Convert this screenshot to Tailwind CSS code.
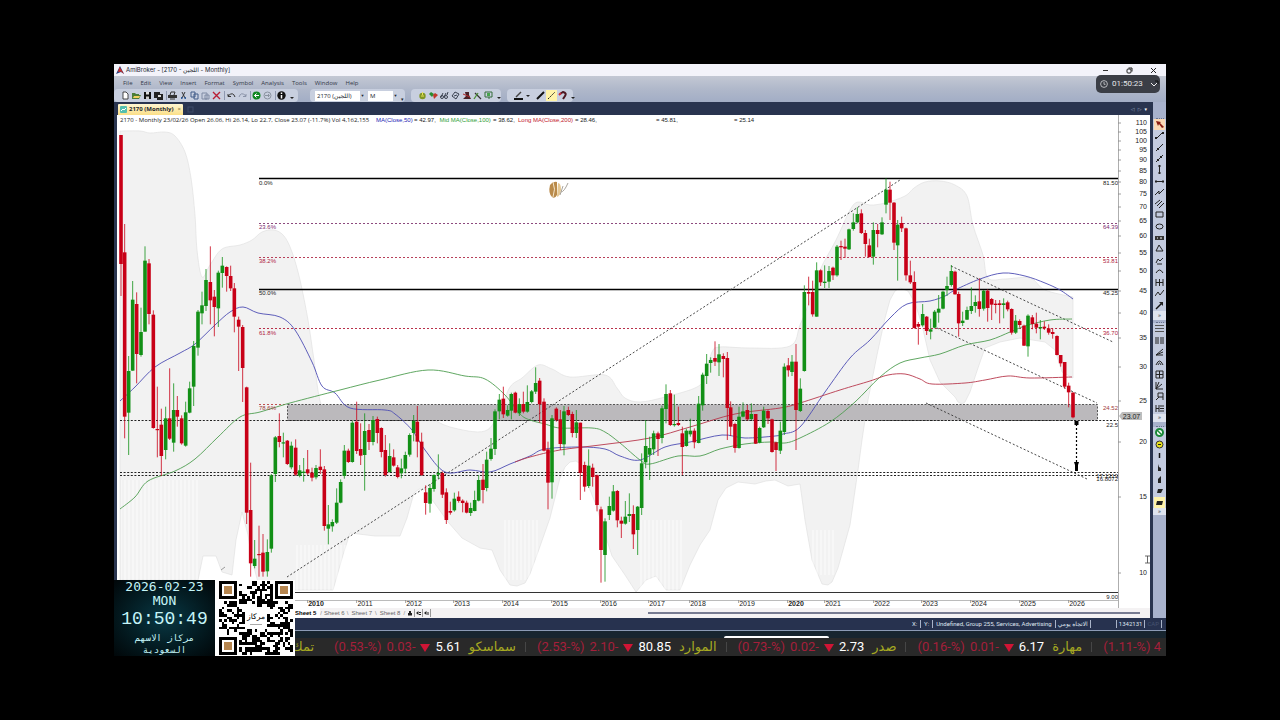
<!DOCTYPE html>
<html lang="en">
<head>
<meta charset="utf-8">
<title>AmiBroker - 2170 Monthly</title>
<meta name="viewport" content="width=device-width, initial-scale=1">
<script src="https://cdn.jsdelivr.net/npm/@tailwindcss/browser@4"></script>
</head>
<body class="bg-black min-h-screen px-[114px] py-16 font-['Open_Sans','Noto_Sans',sans-serif] text-[#20242e]">
<main class="relative flex flex-col bg-[#29344f] overflow-hidden">
  <header class="flex items-center h-3 bg-[#f3f3fa] pl-[2px] pr-[9px] text-[6px] leading-3">
    <svg class="w-2 h-2 mr-[2px]" viewBox="0 0 8 8"><path d="M0 8L4 0l4 8-3-2z" fill="#293b7a"/><path d="M3.500 1L8 8 5 5.500 2 6z" fill="#d23025"/></svg>
    <h1 class="font-['Inter','DejaVu_Sans',sans-serif]">AmiBroker - [2170 - <bdi>اللجين</bdi> - Monthly]</h1>
    <div class="ml-auto flex items-center gap-[17px]">
      <button aria-label="Minimize"><svg class="w-[7px] h-[7px]" viewBox="0 0 7 7"><path d="M1 3.500h5" stroke="#333"/></svg></button>
      <button aria-label="Restore"><svg class="w-[7px] h-[7px]" viewBox="0 0 7 7" fill="none" stroke="#222"><rect x="1" y="2" width="4" height="4" rx="1"/><path d="M2.500 1H6v3.500"/></svg></button>
      <button aria-label="Close"><svg class="w-[7px] h-[7px]" viewBox="0 0 7 7"><path d="M1 1l5 5M6 1L1 6" stroke="#222"/></svg></button>
    </div>
  </header>

  <nav class="flex items-center gap-2 h-[13px] pl-[9px] text-[6px] leading-3 text-[#333949] bg-linear-to-b from-[#c3c8d4] to-[#b0b8ca]">
    <button>File</button><button>Edit</button><button>View</button><button>Insert</button><button>Format</button><button>Symbol</button><button>Analysis</button><button>Tools</button><button>Window</button><button>Help</button>
  </nav>

  <div class="flex items-center h-[13px] bg-linear-to-b from-[#b0b8ca] to-[#a2adc5]">
    <div id="barA" class="flex items-center h-[13px] w-[184px] bg-[#c8cfdf] pl-[6px] rounded-sm"></div>
    <div class="flex items-center h-[13px] w-[95px] ml-3 bg-[#c8cfdf] pl-[5px] gap-[3px] text-[6px] rounded-sm">
      <span class="relative flex"><select aria-label="Ticker" class="appearance-none bg-white w-[50px] h-[10px] px-[2px] leading-[10px] text-[6px] font-['Open_Sans','DejaVu_Sans',sans-serif]"><option>2170 (اللجين)</option></select><i class="absolute right-0 top-0 w-[5px] h-[10px] bg-[#c9d0de] text-[4px] leading-[10px] not-italic text-center pointer-events-none">▼</i></span>
      <span class="relative flex"><select aria-label="Interval" class="appearance-none bg-white w-[30px] h-[10px] px-[2px] leading-[10px] text-[6px]"><option>M</option></select><i class="absolute right-0 top-0 w-[5px] h-[10px] bg-[#c9d0de] text-[4px] leading-[10px] not-italic text-center pointer-events-none">▼</i></span>
      <span class="text-[5px] leading-[5px] self-end">▾</span>
    </div>
    <div id="barB" class="flex items-center h-[13px] w-[90px] ml-[6px] bg-[#c8cfdf] pl-[6px] rounded-sm"></div>
    <div id="barC" class="flex items-center h-[13px] w-[66px] ml-[6px] bg-[#c8cfdf] pl-[6px] rounded-sm"></div>
  </div>

  <div class="flex">
    <div class="flex-1 min-w-0 flex flex-col">
      <div class="flex items-end h-[13px] bg-[#29344f] pl-[4px] pr-[6px]">
        <button class="flex items-center gap-[2px] h-[11px] bg-linear-to-b from-[#fff6d2] to-[#fbdf86] px-[2px] text-[6px] leading-[11px] font-bold rounded-t-[1px]">
          <svg class="w-[7px] h-[7px]" viewBox="0 0 7 7"><rect width="7" height="7" rx="1" fill="#54bfae"/><path d="M1 5l2-2 1 1 2-2" stroke="#fff" fill="none"/></svg>
          <span>2170 (Monthly)</span><span class="font-normal text-[#6d6030] ml-[2px]">×</span>
        </button>
        <button aria-label="New tab" class="ml-1 mb-[2px]"><svg class="w-[7px] h-[7px]" viewBox="0 0 7 7"><rect x="1" y="1" width="5" height="5" fill="none" stroke="#3e4a68"/></svg></button>
        <div class="ml-auto flex items-center gap-[3px] h-[11px] text-[5px] leading-[11px] text-[#97a5c2] font-['DejaVu_Sans',sans-serif]"><span>◁</span><span>▷</span><span class="text-white">▾</span></div>
      </div>
      <div class="mx-[3px] bg-white">
        <svg id="chart" class="block w-full" viewBox="117 115 1033 493" font-family="'Liberation Sans', Arimo, sans-serif" font-size="6" role="img" aria-label="Monthly price chart"></svg>
        <div class="flex items-center h-[10px] bg-[#f4f2f3] text-[6px] leading-[10px] font-['Liberation_Sans',sans-serif]">
          <div class="flex items-center pl-[178px] text-[#666]">
            <button class="font-bold text-black bg-white pr-1">Sheet 5</button><span class="text-[#888]">/</span>
            <button class="px-[2px]">Sheet 6</button><span class="text-[#888]">\</span>
            <button class="px-[3px]">Sheet 7</button><span class="text-[#888]">\</span>
            <button class="px-[3px]">Sheet 8</button><span class="text-[#888]">/</span>
          </div>
          <svg class="w-[26px] h-[8px]" viewBox="0 0 26 8"><path d="M3 4h4v2.500H3zM4 4V2h2v2" fill="#222"/><path d="M9.500 0v8M17.500 0v8M25.500 0v8" stroke="#999"/><path d="M11 4l2.500-2v4zM14 3h2v1h-2zM14 5h2v1h-2zM19 4l2.500-2v4zM22.500 3h1v3h-1z" fill="#222"/></svg>
          <div class="flex-1 h-[2px] bg-[#777b91] ml-[217px] mr-[10px]"></div>
        </div>
      </div>
    </div>
    <aside class="w-[13px] bg-[#a8b2cc] flex flex-col items-center pt-[13px]">
      <div class="w-2 border-t border-dotted border-[#68738f] mt-[3px]"></div>
      <div id="sideA" class="flex flex-col justify-around items-center h-[192px] w-[13px] bg-[#c3cbdf]"></div>
      <div class="w-[13px] h-[9px] bg-[#dfe4ef] text-[6px] leading-[8px] text-center">»</div>
      <div class="w-2 border-t border-dotted border-[#68738f] mt-[2px]"></div>
      <div id="sideB" class="flex flex-col justify-around items-center h-[91px] w-[13px] bg-[#c3cbdf]"></div>
      <div class="w-[13px] h-[8px] bg-[#dfe4ef] text-[6px] leading-[7px] text-center">»</div>
      <div class="w-2 border-t border-dotted border-[#68738f] mt-[4px]"></div>
      <div id="sideC" class="flex flex-col justify-around items-center h-[81px] w-[13px] bg-[#c3cbdf]"></div>
      <div class="w-[13px] h-[7px] bg-[#dfe4ef] text-[6px] leading-[6px] text-center">»</div>
    </aside>
  </div>

  <footer class="flex items-center justify-end h-[13px] bg-[#27324f] border-b border-[#8b9bb5] text-[6px] leading-3 text-[#dfe4ee] font-['Roboto','DejaVu_Sans',sans-serif]">
    <span class="pr-[3px]">X:</span><span class="border-l border-[#a9b3c8] h-2 leading-2 px-[3px]">Y:</span>
    <span class="border-l border-[#a9b3c8] h-2 leading-2 px-[3px]">Undefined, Group 255, Services, Advertising</span>
    <span class="border-l border-[#a9b3c8] h-2 leading-2 px-[2px]" dir="rtl" lang="ar">الاتجاه يومي</span>
    <span class="border-l border-[#a9b3c8] h-2 w-[26px]"></span>
    <span class="border-l border-[#a9b3c8] h-2 leading-2 px-[2px]">1342131</span>
    <span class="border-l border-[#a9b3c8] h-2 leading-2 px-[2px] text-[#46526f]">CAP</span>
    <span class="border-l border-[#a9b3c8] h-2 w-[5px]"></span>
  </footer>
  <div class="h-[7px] bg-[#17252f] flex items-end"><div class="ml-[58%] w-[105px] h-[2px] bg-white rounded-t-full"></div></div>
  <section id="ticker" aria-label="Quotes" class="flex items-center h-[18px] bg-[#292929] pl-[178px] overflow-hidden whitespace-nowrap text-[13px] leading-[18px] font-['Roboto','DejaVu_Sans',sans-serif] text-[#a51f3b]"></section>

  <!-- Clock and QR code overlays -->
  <div class="absolute left-0 bottom-0 flex h-[76px]">
    <section class="relative w-[101px] bg-radial from-[#093945] to-[#010709] text-center font-['DejaVu_Sans_Mono',monospace] text-[#c5f5f8] overflow-hidden">
      <svg class="absolute right-[8px] top-0 w-[27px] h-[27px]" viewBox="0 0 27 27"><path d="M6 1a12 12 0 1 0 20 19A12 12 0 0 1 6 1z" fill="#9fe6ee"/></svg>
      <p class="relative text-[13px] leading-[14px]">2026-02-23</p>
      <p class="relative text-[13px] leading-[13px]">MON</p>
      <p class="relative text-[18px] leading-[25px] font-['Liberation_Mono',monospace]">10:50:49</p>
      <p class="relative text-[9px] leading-[12px]" dir="rtl" lang="ar">مركاز الاسهم<br>السعودية</p>
    </section>
    <div class="w-[80px] bg-white pt-[1px] pl-1"><svg id="qr" class="w-[74px] h-[74px]" viewBox="0 0 29 29" shape-rendering="crispEdges" role="img" aria-label="QR code"></svg></div>
  </div>

  <!-- Recording timer -->
  <div class="absolute right-[6px] top-[11px] flex items-center gap-1 w-16 h-[18px] rounded-[5px] bg-[#3b3e46] text-[#e6e7ea] text-[8px] leading-[18px] pl-1 font-['Roboto',sans-serif]">
    <svg class="w-2 h-2" viewBox="0 0 8 8" fill="none" stroke="#d5d6d9"><circle cx="4" cy="4" r="3.400" stroke-width=".8"/><path d="M4 2v2.300h1.500" stroke-width=".8"/></svg>
    <span>01:50:23</span>
    <svg class="w-[9px] h-2 ml-[3px]" viewBox="0 0 9 8" fill="none" stroke="#eee"><path d="M1 3l3 3 3-3"/><path d="M5 1h3v3" stroke="#111"/></svg>
  </div>
</main>

<script>
const G = '#129016', R = '#c80017';
/* Candles per segment: x, high, body top, body bottom, low (third-pixels from the segment origin). Negative x marks a falling month. */
const segments = [
 [114,350,`-21 -645 -645 -258 -162;-32 -378 -293 200 265;44 18 63 188 315;56 -207 -151 62 62;-68 -173 -138 12 100;81 -127 -54 15 20;93 -311 -268 -55 -55;-105 -273 -260 -108 -77;-118 -119 -106 234 236;-130 110 237 240 322;-142 176 224 318 378;155 170 205 300 328;-167 55 205 266 270;179 100 180 278 305;-190 138 180 200 230;-203 196 205 280 284;215 155 187 287 290;227 95 115 188 190;239 -27 -12 110 168;252 -120 -115 -7 17;264 -175 -134 -110 -77;276 -243 -210 -132 -117;-289 -311 -204 -149 -77;-301 -180 -160 -129 -41;313 -238 -232 -125 -69;325 -279 -253 -231 -187;-338 -251 -249 -222 -175;-350 -253 -222 -185 -177;-361 -201 -185 -100 -53;-374 -100 -91 -70 63;-386 -75 -69 54 156;-398 110 112 488 522;-410 338 480 640 680;422 570 626 648 655;-435 527 612 615 680;-447 552 608 665 680;460 568 606 664 680;472 372 376 596 608;484 258 262 372 396;-496 190 258 276 292;508 248 277 280 322;-520 270 272 342 345;532 275 287 352 358;-545 268 293 374 378;557 345 361 377 382;569 324 365 369 395;-581 300 358 370 375;-594 353 368 383 394;606 345 354 382 388;-619 298 350 360 372;-631 348 358 528 542;643 465 523 536 583;655 508 516 529 545;668 415 458 518 522;680 388 396 458 460;691 285 302 378 386;-703 296 302 336 339;715 212 218 336 338;-728 155 215 303 312;-740 220 297 317 345;752 190 243 315 422;-765 222 240 276 300;777 198 210 276 286;-790 200 207 249 280;-802 232 234 306 322`],
 [380,350,`-16 255 300 375 380;29 280 318 366 368;-41 298 322 347 350;-53 345 352 381 385;64 326 355 370 385;76 305 315 356 370;89 250 255 314 320;101 195 213 249 274;-112 168 215 275 322;-125 248 275 375 378;-137 406 427 459 494;150 402 414 461 488;162 373 375 417 425;175 313 369 374 387;-187 364 369 434 444;-199 415 427 510 522;-211 455 483 488 494;223 428 446 481 485;-236 424 440 453 458;-248 448 452 459 487;-260 452 458 488 490;272 458 474 489 498;284 422 450 483 484;296 375 390 452 454;-309 342 389 420 460;320 305 329 414 424;333 264 296 327 332;345 178 184 297 315;358 132 149 184 208;-370 110 146 193 204;383 166 180 197 200;394 128 132 182 208;-406 125 128 188 190;418 145 162 190 198;-430 125 162 185 190;442 106 156 185 188;455 120 124 156 160;467 52 99 125 132;-479 84 92 163 218;-492 145 155 302 304;-504 275 298 398 478;516 195 205 397 446;-529 172 176 210 215;-541 180 208 282 300;552 168 184 283 316;-565 170 180 195 198;-577 185 192 249 262;589 180 217 249 264;-601 218 218 369 450;-614 335 345 410 425;626 298 347 408 414;-638 341 353 381 410;-651 374 376 465 484;-663 470 478 600 698;675 505 514 615 695;688 440 468 495 510;700 405 424 482 485;-712 420 423 511 532;-724 500 512 521 564;736 453 500 521 524;748 430 492 498 516;-760 466 492 553 597;773 468 470 540 615;785 310 340 474 495;797 210 288 337 355`],
 [640,320,`29 350 384 404 480;41 332 340 388 405;-54 335 340 357 408;66 257 265 354 370;78 193 222 267 310;-91 210 220 315 318;103 224 312 315 320;-115 260 309 315 318;-127 320 340 381 465;139 326 332 378 380;151 296 332 343 350;-163 325 332 367 385;176 228 251 369 370;188 158 164 256 272;200 102 131 168 192;212 112 120 129 158;-225 64 114 125 138;237 72 103 127 168;-250 100 108 117 172;-262 96 114 264 360;-272 244 262 320 348;-285 308 312 384 398;297 260 290 384 386;309 247 274 290 292;-322 255 270 298 302;334 250 282 297 300;-347 282 282 371 372;359 320 324 368 370;371 260 272 322 324;-384 270 273 295 312;-396 296 298 396 398;-408 365 367 390 453;421 305 332 392 402;433 130 140 336 345;-445 114 136 151 170;456 105 125 156 168;-468 72 125 270 390;481 175 206 273 276`],
 [790,160,`43 376 396 633 635;-56 350 396 401 436;-68 362 396 463 470;80 307 331 470 470;-92 328 331 367 378;104 316 365 369 384;117 318 333 365 384;-129 320 323 346 360;141 255 260 346 350;-153 242 258 262 300;-165 236 260 266 294;177 206 208 268 270;190 160 187 207 212;202 142 162 187 190;-214 148 160 219 222;-226 210 219 252 290;-238 236 256 291 292;250 187 210 290 314;-263 192 210 222 262;276 172 187 223 225;288 55 89 134 160;-300 65 89 128 180;-312 126 128 248 270;323 180 194 256 362;-335 170 189 205 216;-348 203 205 346 362;-361 302 346 367 372;-373 334 366 504 506;-385 486 492 500 554;398 432 462 496 500;-410 468 470 513 525;422 476 508 515 538;434 450 455 503 505;446 405 446 458 488;459 392 395 446 448;471 350 378 390 408;484 315 333 375 380;-495 332 335 403 404;-506 395 402 490 530;518 455 482 489 498;531 440 450 479 480;544 382 438 453 462;556 406 426 438 458;-568 355 424 447 470;581 390 392 446 452;-593 388 392 444 485`],
 [960,240,`-95 174 177 194 240;-107 180 191 195 220;-119 180 190 195 250;131 175 190 195 235;-143 182 187 208 214;-155 205 207 278 284;167 225 242 278 282;-179 238 243 255 262;-192 254 257 317 318;204 223 227 319 350;-217 225 232 252 268;-229 218 251 263 280;241 240 261 265 298;-253 244 260 265 270;-266 253 265 278 284;-278 265 276 282 296;-291 286 288 345 346;-302 345 345 370 380;-314 366 366 440 446;-326 428 437 457 502;-339 456 458 532 535`]
];
const line = (x1,y1,x2,y2,c,w=1,d='') => `<line x1="${x1}" y1="${y1}" x2="${x2}" y2="${y2}" stroke="${c}" stroke-width="${w}" ${d?`stroke-dasharray="${d}"`:''}/>`;
const text = (x,y,s,c='#222',extra='') => `<text x="${x}" y="${y}" fill="${c}" ${extra}>${s}</text>`;
/* Smooth curve through the points */
function curve(s){
  const p = s.split(' ').map(q=>q.split(',').map(Number));
  let d = `M${p[0]}`;
  for(let i=0;i<p.length-1;i++){
    const a=p[i-1]||p[i], b=p[i], c=p[i+1], e=p[i+2]||c;
    d += `C${b[0]+(c[0]-a[0])/6},${b[1]+(c[1]-a[1])/6} ${c[0]-(e[0]-b[0])/6},${c[1]-(e[1]-b[1])/6} ${c}`;
  }
  return d;
}
const upper='120,131 140,131 150,133 165,132 175,136 185,152 191,178 195,215 197,250 202,277 210,265 222,249 240,245 252,240 262,232 274,230 284,236 292,252 300,280 308,320 314,360 321,404 335,419 380,420 395,412 425,416 450,427 485,431 500,410 510,387 522,378 538,365 552,369 570,377 605,375 617,388 625,398 640,402 665,397 697,387 705,375 712,352 720,347 750,348 790,346 800,325 810,300 820,270 836,240 850,210 858,202 870,205 885,203 905,196 914,188 925,182 940,181 955,185 967,196 973,225 983,255 988,278 1005,279 1030,278 1045,290 1073,297';
const lower='1073,378 1062,372 1055,350 1045,342 1020,338 1000,342 985,348 978,368 970,392 965,402 962,404 958,402 955,397 940,382 930,360 922,325 915,303 908,291 900,288 895,291 890,300 885,318 877,355 868,400 862,440 858,470 850,525 838,568 832,582 828,585 822,584 812,560 805,520 800,484 788,486 775,480 766,481 755,484 738,482 726,488 718,500 710,530 700,545 690,565 680,590 666,590 656,576 646,580 636,592 625,575 612,556 602,525 596,505 590,490 582,465 576,461 570,462 565,467 560,478 550,518 538,552 530,574 525,583 517,586 510,585 500,570 492,550 480,548 462,538 448,522 438,508 425,490 419,489 414,493 407,518 400,536 375,536 350,533 343,555 333,590 260,590 252,560 248,535 242,512 236,540 232,575 222,572 216,556 203,556 198,580 120,580';
let h = `<defs><pattern id="st" width="4" height="8" patternUnits="userSpaceOnUse"><path d="M1 0v8" stroke="#fff" stroke-opacity=".7"/></pattern></defs><rect x="117" y="115" width="1033" height="493" fill="#fff"/>`;
h += `<path d="${curve(upper)} L${lower}Z" fill="#f2f2f2" stroke="#dedede" stroke-width=".6"/>`;
h += `<rect x="121" y="480" width="78" height="100" fill="url(#st)"/><rect x="296" y="545" width="50" height="45" fill="url(#st)"/><rect x="502" y="520" width="38" height="60" fill="url(#st)"/><rect x="640" y="520" width="44" height="70" fill="url(#st)"/><rect x="810" y="530" width="26" height="45" fill="url(#st)"/>`;
h += `<rect x="287.500" y="404.500" width="810" height="16" fill="#bbb9bc" stroke="#333" stroke-dasharray="2 1.500" stroke-width=".8"/>`;
h += line(259,178.5,1118,178.5,'#000',1.4)+line(259,289.500,1118,289.500,'#000',1.4);
h += line(259,223.500,1118,223.500,'#8d4a7e',1,'2 2')+line(259,257.500,1118,257.500,'#b8405a',1,'2 2')+line(259,328.500,1118,328.500,'#b8304a',1,'2 2')+line(259,404.500,287,404.500,'#c05050',1,'2 2');
[420.500,472.500,475.500].forEach(y=>h+=line(120,y,1118,y,'#222',1,'2 1.600'));
h += line(287,577,900,180,'#333',.9,'2 2')+line(951,266,1113,342,'#333',.9,'2 2')+line(937,328,1097,403,'#333',.9,'2 2')+line(926,403,1087,479,'#333',.9,'2 2');
[['#4d4db3','120,401 135,387 155,367 180,353 195,344 215,325 230,312 243,307 258,313 280,317 295,330 312,362 322,386 335,393 350,408 385,410 395,414 412,430 425,450 445,472 470,470 490,472 510,464 530,456 545,449 580,447 605,449 620,456 640,460 665,447 690,442 722,435 745,438 775,436 783,434 800,427 825,392 850,358 870,340 890,318 907,304 930,301 945,296 955,290 980,279 1003,273 1025,276 1045,283 1060,290 1073,299'],
 ['#4e9d50','120,509 135,497 148,481 175,471 195,459 218,437 240,417 260,412 290,403 340,390 380,380 428,370 465,376 485,379 505,395 520,414 530,420 545,424 560,428 592,428 605,432 620,443 640,460 650,464 678,456 700,456 720,449 745,444 770,442 785,443 800,438 830,422 855,402 880,377 900,363 920,358 940,354 965,345 990,340 1010,332 1025,326 1050,320 1072,319'],
 ['#b8384c','515,462 530,457 560,450 600,445 650,438 690,427 735,414 780,408 800,403 840,390 870,381 888,375 905,374 920,379 932,384 965,383 985,380 1008,376 1030,378 1072,377']
].forEach(([c,s])=>h+=`<path d="${curve(s)}" fill="none" stroke="${c}" stroke-width=".9"/>`);
for(const [ox,oy,s] of segments) for(const r of s.split(';')){
  const [x0,hi,t,b,lo]=r.split(' ').map(Number), c=x0<0?R:G, x=ox+Math.abs(x0)/3, Y=v=>oy+v/3;
  h += line(x,Y(hi),x,Y(lo),c,.8)+`<rect x="${x-1.8}" y="${Y(t)}" width="3.600" height="${Math.max(1.2,(b-t)/3)}" fill="${c}"/>`;
}
h += line(1076.5,424,1076.5,468,'#000',1.2,'2 2')+`<path d="M1074.500 421h4v4h-4zM1074 462h5l-1 3v6h-3v-6z"/>`;
[[185,'0.0%','81.50','#222'],[229,'23.6%','64.39','#7d2a70'],[263,'38.2%','53.81','#b02242'],[295,'50.0%','45.25','#222'],[335,'61.8%','36.70','#b02242'],[410,'78.6%','24.52','#a03a3a']].forEach(([y,a,b,c])=>h+=text(259,y,a,c)+text(1118,y,b,c,'text-anchor="end"'));
h += text(1118,427,'22.5','#222','text-anchor="end"')+text(1118,478,'17.1319','#222','text-anchor="end"')+text(1118,481,'16.8072','#222','text-anchor="end"')+text(1118,599,'9.00','#222','text-anchor="end"');
h += line(120,592.500,1118,592.500,'#333',1.2)+line(120,600.500,1118,600.500,'#aaa',.8)+line(1118.500,115,1118.500,608,'#999',.8);
[[110,123],[105,132],[100,141],[95,150],[90,160],[85,171],[80,182],[75,194],[70,207],[65,221],[60,236],[55,253],[50,271],[45,291],[40,313],[35,338],[30,367],[25,401],[20,442],[15,497],[10,573]].forEach(([v,y])=>h+=line(1118,y,1121,y,'#888',.8)+text(1147,y+2,v,'#222','text-anchor="end" font-size="7"'));
[[2010,316],[2011,365],[2012,414],[2013,462],[2014,511],[2015,560],[2016,609],[2017,657],[2018,698],[2019,747],[2020,796],[2021,833],[2022,882],[2023,930],[2024,979],[2025,1028],[2026,1077]].forEach(([v,x])=>h+=line(x-8.5,600,x-8.5,603,'#888',.7)+text(x,606,v,'#222',`text-anchor="middle" font-size="7" ${v%10?'':'font-weight="bold"'}`));
h += `<path d="M1119 416l3-4h20v8h-20z" fill="#bdbdbd"/>`+text(1131.5,418.500,'23.07','#222','text-anchor="middle" font-size="7"');
h += `<g transform="translate(557 190)"><path d="M-7-5q3-4 7-3v13q-2 4-5 2-4-4-2-12z" fill="#b98a4a"/><path d="M-4-8q3 7 0 15" stroke="#f5e7cc" fill="none"/><path d="M1-7q3 0 3 7-1 6-4 7z" fill="#e5c894"/><path d="M4 2q3 0 7-9M3 5l3-9" stroke="#a9a49c" fill="none"/></g>`;
h += `<path d="M221 570l4-3" stroke="#999"/><path d="M1145 556h5M1147.500 556v7M1145 563h5" stroke="#444" stroke-width=".8"/>`;
h += `<text y="122" fill="#222"><tspan x="120" font-family="'Open Sans', sans-serif">2170 - Monthly 23/02/26 Open 26.06, Hi 26.14, Lo 22.7, Close 23.07 (-11.7%) Vol 4,162,155</tspan><tspan x="376" fill="#2222b5">MA(Close,50)</tspan><tspan x="414">= 42.97,</tspan><tspan x="439.500" fill="#2f9e35">Mid MA(Close,100)</tspan><tspan x="493">= 38.62,</tspan><tspan x="518" fill="#c2182b">Long MA(Close,200)</tspan><tspan x="575">= 28.46,</tspan><tspan x="656">= 45.81,</tspan><tspan x="734">= 25.14</tspan></text>`;
document.getElementById('chart').innerHTML = h;

/* Toolbars: label, icon markup on a 9x9 grid, optional background */
const S = (d,c='#222',w=1)=>`<path d="${d}" fill="none" stroke="${c}" stroke-width="${w}"/>`, F=(d,c='#222')=>`<path d="${d}" fill="${c}"/>`;
const caret=['More',F('M2 6h4l-2 2z')], bar=['|',''];
const fill=(id,a)=>document.getElementById(id).innerHTML=a.map(([n,m,bg])=>n==='|'?'<span class="w-px h-[9px] ml-[2px] mr-[1px] bg-[#8e98b0]"></span>':`<button aria-label="${n}" class="shrink-0 w-[11px] h-[11px] flex items-center justify-center ${bg||''}"><svg class="w-[9px] h-[9px]" viewBox="0 0 9 9">${m}</svg></button>`).join('');
fill('barA',[
 ['New',F('M2 1h3l2 2v5H2z','#fff')+S('M2 1h3l2 2v5H2z','#222',.8)],['Open',F('M0 8V2h3l1 1h3v1h2L7 8z','#4c7d38')+F('M2 5h6L7 7H1z','#f3d060')],['Save',F('M1 1h7v7H1z','#111')+F('M3 1h3v2.500H3z','#ddd')+F('M3 5.500h3V8H3z','#ccc')],['Save all',F('M0 1h6v6H0z','#222')+F('M3 3h6v6H3z','#222')+F('M4 4h3v2H4z','#ddd')],bar,
 ['Print',F('M0 4h9v3H0z','#333')+S('M2 4l1-3h4L6 4M2 8h5','#333')],['Cut',S('M3 1l3 6M6 1L3 7','#333')+S('M2 7h1.500M5.500 7H7','#335f9c',2)],['Copy',S('M1 1h4v5H1zM4 3h4v5H4z','#425c88')],['Paste',S('M1 2h5v6H1zM4 4h4v4H4z','#7f8aa3')],['Delete',S('M1 1l7 7M8 1L1 8','#b81e36',1.4)],bar,
 ['Undo',S('M1 3v2.500h3M1 5q5-5 7 1','#333')],['Redo',S('M8 3v2.500H5M8 5Q3 0 1 6','#8a93a8')],bar,
 ['Back','<circle cx="4.500" cy="4.500" r="4" fill="#108724"/>'+S('M7 4.500H2.500M4.500 2.500l-2 2 2 2','#fff')],['Forward','<circle cx="4.500" cy="4.500" r="3.500" fill="none" stroke="#8a93a0"/>'+S('M2 4.500h4M5 3l1.500 1.500L5 6','#8a93a0')],bar,
 ['Info','<circle cx="4.500" cy="4.500" r="4.200" fill="#111"/>'+S('M4.500 1.500v1.500M4.500 4v3.500','#fff',1.500)],caret]);
fill('barB',[
 ['Smile','<circle cx="4.500" cy="5" r="3.200" fill="#819625"/>'+S('M3 5h3M4.500 1v3','#e7e25c')],['Symbol',F('M0 3l2-2 3 2-2 3z','#2a8d30')+F('M4 4l2-2 3 2-4 4z','#c0392b')],['Explore',S('M1 6l2-4M4 6l2-4M7 4l1-3','#3a4150')+'<circle cx="2" cy="6" r="1.500" fill="none" stroke="#3a4150"/><circle cx="6" cy="6" r="1.500" fill="none" stroke="#3a4150"/>'],['Scan',S('M1 5l3-4 4 2-3 5z','#3a4150')+S('M3 5l3-1','#3a4150')],['Backtest',F('M3 1h4v3l2 4H1l3-3z','#4a2227')+S('M1 3l7 3','#b52d30')],['Wand',S('M2 2l6 6','#333',1.300)+S('M1 8l4-6','#4a8f35',1.300)],['Report',S('M1 1h7v5H1zM5 6v2','#356c3a')+F('M3 2h3v3H3z','#47a44d')],caret]);
fill('barC',[
 ['Line colour',S('M2 6l5-5','#444',1.500)+F('M0 7h9v2H0z','#111')],['Options',F('M1 4h4L3 6z')],['Thick line',S('M1 8l7-7','#111',2)],['Dashed line',S('M1 8l7-7','#222',1).replace('/>',' stroke-dasharray="2 1"/>'),'bg-[#fff3a8]'],['Magnet',S('M2 3l3-2q4 1 2 4L5 8','#4c1722',2)+S('M1 4l2-2','#c92b3b',2)],caret]);
fill('sideA',[
 ['Select',F('M1 1l5 1-1 1 4 4-2 1-3-4-1 2z','#8a1c12'),'bg-[#fbd9b4]'],['Trend line',S('M1.500 7.500l6-6')+F('M0 6h2v2H0zM7 1h2v2H7z')],['Ray',S('M1 8l7-7')+F('M2 5h2v2H2z')],['Extended',S('M1 8l7-7')+F('M2 5h2v2H2zM5 2h2v2H5z')],['Vertical',S('M4.500 0v9')+F('M3.500 0h2v2h-2zM3.500 7h2v2h-2z')],['Horizontal',S('M0 4.500h9')+F('M0 3.500h2v2H0zM7 3.500h2v2H7z')],['Channel',S('M0 7l4-4v3l5-5')],['Parallel',S('M0 5l5-4M2 7l5-5M4 9l5-5')],['Rectangle',S('M1 2h7v5H1z')],['Ellipse','<ellipse cx="4.500" cy="4.500" rx="3.500" ry="2.500" fill="none" stroke="#222"/>'],['Text',F('M0 3h9v4H0z','#333')+S('M2 5h1M5 5h2','#fff')],['Triangle',S('M4 1L1 7h7z')],['Gann',S('M1 7l2-4 2 2 3-3M2 8h5')],['Arc',S('M1 6q3.500-6 7 0')],['Cycle',S('M1 1v7M4.500 1v7M8 1v7M1 4.500h7')],['Zigzag',S('M0 7l3-4 2 3 4-5')],['Arrow',S('M1 8l6-6','#111',1.500)+F('M4 1h4v4z')]]);
fill('sideB',[
 ['Fib retracement',S('M0 1.500h9M0 4.500h9M0 7.500h9','#555')],['Fib zones',S('M1 1v7M3 1v7M6 1v7M8 1v7')],['Fib fan',S('M1 8l7-6M1 8l7-3M1 8h7')],['Fib arc',S('M1 7q3.500-8 7 0M3 7q1.500-4 3 0')],['Grid',S('M1 1h7v7H1zM4.500 1v7M1 4.500h7')],['Gann fan',S('M1 1v7h7M1 8l3-7M1 8l6-5')],['Regression',S('M1 8l3-3M3 1h5v4H3zM8 5v3')],['Extension',S('M1 1v7M1 4.500h3M4 1v7M5 2h4M5 4.500h4M5 7h4')]]);
fill('sideC',[
 ['Buy','<circle cx="4.500" cy="4.500" r="3.500" fill="#fff" stroke="#1a8a38" stroke-width="2"/>'+S('M2 2l5 5','#1a8a38',1.5)],['Sell','<circle cx="4.500" cy="4.500" r="3.500" fill="#e9e11e" stroke="#333"/>'+S('M3 4.500h3')],['One',S('M4.500 2v5','#111',1.5)],['Drop',F('M4 1v3l2 1v3H3V4z')],['Note',F('M6 1L3 4v4h3z')],['Flag',F('M2 7l1-4h5L6 7z')],['Marker',F('M1 7l1-4h6L7 7z'),'bg-[#fff3a8]']]);

/* Quote strip */
const quotes=[['0.53','0.03-','5.61','سماسكو'],['2.53','2.10-','80.85','الموارد'],['0.73','0.02-','2.73','صدر'],['0.16','0.01-','6.17','مهارة']];
document.getElementById('ticker').innerHTML='<span class="text-[#a7a921] mr-5" dir="rtl">تمك</span>'+quotes.map(([p,c,v,n])=>`<span class="shrink-0 flex items-center gap-[5px] mr-[11px]" dir="ltr"><span>(${p}-%)</span><span>${c}</span><svg class="w-[10px] h-[9px]" viewBox="0 0 10 9"><path d="M0 1h10L5 9z" fill="#d01535"/></svg><span class="text-white">${v}</span><bdi class="text-[#a7a921] ml-[3px]">${n}</bdi><span class="w-px h-[10px] bg-[#464646] ml-1"></span></span>`).join('')+'<span class="shrink-0">(1.11-%) 4</span>';

/* QR symbol */
let q='',seed=7;
const rnd=()=>(seed=(seed*16807)%2147483647)/2147483647;
for(let y=0;y<29;y++)for(let x=0;x<29;x++){const v=rnd()<.53;if((x<8&&y<8)||(x>20&&y<8)||(x<8&&y>20)||(x>9&&x<19&&y>9&&y<19))continue;if(v)q+=`M${x} ${y}h1v1h-1z`;}
let qh=`<path d="${q}"/>`;
[[0,0],[22,0],[0,22]].forEach(([x,y])=>qh+=`<rect x="${x+.5}" y="${y+.5}" width="6" height="6" fill="none" stroke="#000"/><rect x="${x+2}" y="${y+2}" width="3" height="3" fill="#b5854f"/>`);
qh+=`<text x="14.500" y="15" font-size="3" text-anchor="middle" font-family="DejaVu Sans, sans-serif">مركاز</text><path d="M12 17h5" stroke="#aaa" stroke-width=".4"/>`;
document.getElementById('qr').innerHTML=qh;
</script>
</body>
</html>
